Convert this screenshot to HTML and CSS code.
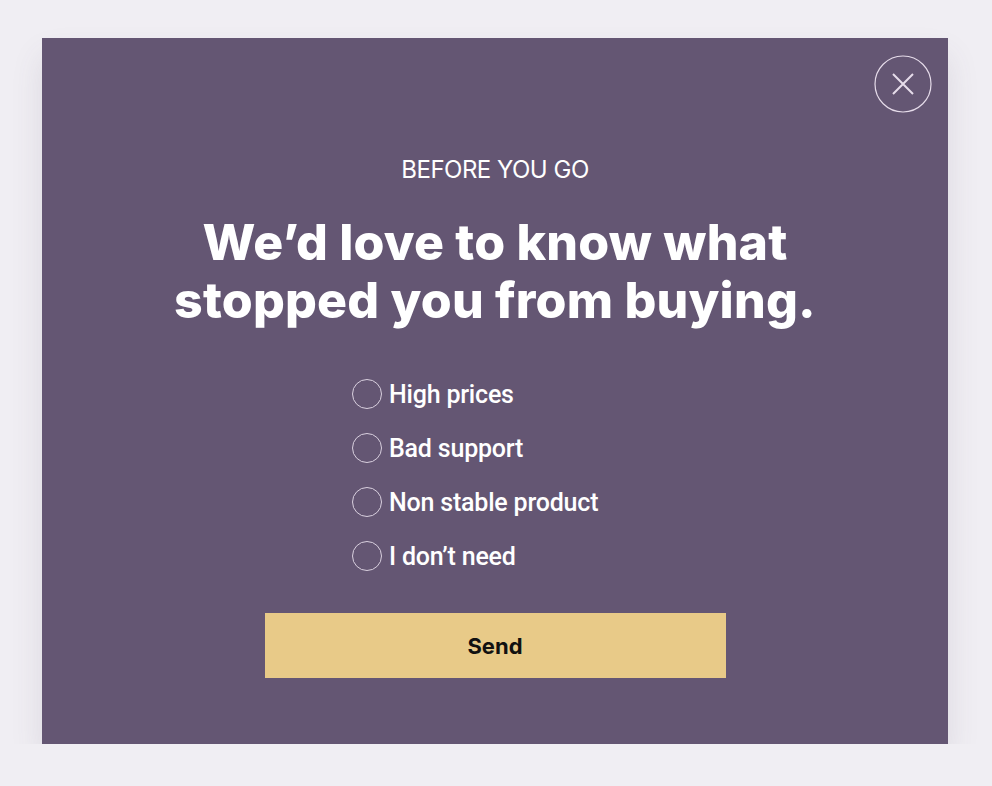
FILE: index.html
```html
<!DOCTYPE html>
<html lang="en">
<head>
    <meta charset="UTF-8">
    <meta name="viewport" content="width=device-width, initial-scale=1.0">
    <title>Before you go</title>
    <link rel="stylesheet" href="styles.css">
</head>
<body>
    <main class="popup">
        <button class="close" type="button" aria-label="Close">
            <svg width="58" height="58" viewBox="0 0 58 58" fill="none" stroke="#e6dcea">
                <circle cx="29" cy="29" r="28" stroke-width="1.2"/>
                <path d="M19 19 L39 39 M39 19 L19 39" stroke-width="2"/>
            </svg>
        </button>
        <p class="eyebrow">BEFORE YOU GO</p>
        <h1>We’d love to know what<br>stopped you from buying.</h1>
        <ul class="options">
            <li><span class="radio"></span>High prices</li>
            <li><span class="radio"></span>Bad support</li>
            <li><span class="radio"></span>Non stable product</li>
            <li><span class="radio"></span>I don’t need</li>
        </ul>
        <button class="send" type="button">Send</button>
    </main>
</body>
</html>
```

FILE: styles.css
```css
body {
    margin: 0;
    background: #f0eef3;
    font-family: Inter, "Liberation Sans", sans-serif;
    color: #fff;
}

.popup {
    position: relative;
    box-sizing: border-box;
    width: 906px;
    height: 706px;
    margin: 38px 0 0 42px;
    padding-top: 116px;
    background: #645673;
    box-shadow: 0 18px 30px rgba(80, 70, 100, 0.12);
    display: flex;
    flex-direction: column;
    align-items: center;
}

.close {
    position: absolute;
    top: 17px;
    right: 16px;
    padding: 0;
    border: 0;
    background: none;
    display: block;
}
.close svg {
    display: block;
}

.eyebrow {
    margin: 0;
    font-size: 24px;
    line-height: 32px;
    letter-spacing: -0.5px;
    font-weight: 400;
}

h1 {
    margin: 27px 0 0;
    font-size: 50px;
    line-height: 58px;
    font-weight: 800;
    text-align: center;
    letter-spacing: 0.2px;
}

.options {
    list-style: none;
    margin: 38px 0 0 310px;
    padding: 0;
    align-self: stretch;
}
.options li {
    display: flex;
    align-items: center;
    height: 54px;
    font-family: Roboto, "Liberation Sans", sans-serif;
    font-size: 25px;
    font-weight: 500;
    letter-spacing: -0.2px;
}
.radio {
    box-sizing: border-box;
    width: 30px;
    height: 30px;
    margin-right: 7px;
    border: 1.5px solid #d9d0df;
    border-radius: 50%;
}

.send {
    margin-top: 30px;
    width: 461px;
    height: 65px;
    border: 0;
    background: #e8ca88;
    color: #111;
    font-family: Inter, "Liberation Sans", sans-serif;
    font-size: 22px;
    font-weight: 700;
}
```
